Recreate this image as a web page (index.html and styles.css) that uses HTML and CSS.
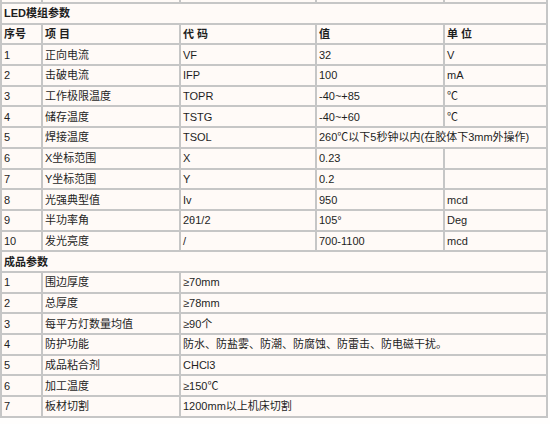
FILE: index.html
```html
<!DOCTYPE html>
<html>
<head>
<meta charset="utf-8">
<link rel="stylesheet" href="styles.css">
</head>
<body>
<table class="spec">
<colgroup>
<col class="c-no"><col class="c-item"><col class="c-code"><col class="c-val"><col class="c-unit">
</colgroup>
<tr class="stub"><td></td><td></td><td></td><td></td><td></td></tr>
<tr><td colspan="5" class="title">LED模组参数</td></tr>
<tr class="head"><td>序号</td><td>项 目</td><td>代 码</td><td>值</td><td>单 位</td></tr>
<tr><td>1</td><td>正向电流</td><td>VF</td><td>32</td><td>V</td></tr>
<tr><td>2</td><td>击破电流</td><td>IFP</td><td>100</td><td>mA</td></tr>
<tr><td>3</td><td>工作极限温度</td><td>TOPR</td><td>-40~+85</td><td>℃</td></tr>
<tr><td>4</td><td>储存温度</td><td>TSTG</td><td>-40~+60</td><td>℃</td></tr>
<tr><td>5</td><td>焊接温度</td><td>TSOL</td><td colspan="2">260℃以下5秒钟以内(在胶体下3mm外操作)</td></tr>
<tr><td>6</td><td>X坐标范围</td><td>X</td><td>0.23</td><td></td></tr>
<tr><td>7</td><td>Y坐标范围</td><td>Y</td><td>0.2</td><td></td></tr>
<tr><td>8</td><td>光强典型值</td><td>Iv</td><td>950</td><td>mcd</td></tr>
<tr><td>9</td><td>半功率角</td><td>2θ1/2</td><td>105°</td><td>Deg</td></tr>
<tr><td>10</td><td>发光亮度</td><td>/</td><td>700-1100</td><td>mcd</td></tr>
<tr><td colspan="5" class="title">成品参数</td></tr>
<tr><td>1</td><td>围边厚度</td><td colspan="3">≥70mm</td></tr>
<tr><td>2</td><td>总厚度</td><td colspan="3">≥78mm</td></tr>
<tr><td>3</td><td>每平方灯数量均值</td><td colspan="3">≥90个</td></tr>
<tr><td>4</td><td>防护功能</td><td colspan="3">防水、防盐雾、防潮、防腐蚀、防雷击、防电磁干扰。</td></tr>
<tr><td>5</td><td>成品粘合剂</td><td colspan="3">CHCl3</td></tr>
<tr><td>6</td><td>加工温度</td><td colspan="3">≥150℃</td></tr>
<tr><td>7</td><td>板材切割</td><td colspan="3">1200mm以上机床切割</td></tr>
</table>
</body>
</html>
```
FILE: styles.css
```css
html, body {
  margin: 0;
  padding: 0;
  background: #fffefd;
}
body {
  width: 550px;
  height: 424px;
  overflow: hidden;
  font-family: "Liberation Sans", "Noto Sans CJK SC", sans-serif;
  font-size: 11px;
  color: #1e1e1e;
}
.spec {
  border-collapse: collapse;
  table-layout: fixed;
  width: 546px;
  background: #fffaf7;
}
.c-no { width: 41px; }
.c-item { width: 138px; }
.c-code { width: 136px; }
.c-val { width: 128px; }
.c-unit { width: 103px; }
.spec td {
  border: 2px solid #c6c6c6;
  padding: 0 2px;
  height: 18.7px;
  line-height: 14px;
  white-space: nowrap;
  overflow: hidden;
  vertical-align: middle;
}
.spec tr.stub td {
  height: 2px;
  border-top: none;
  padding: 0;
}
.spec td.title,
.spec tr.head td {
  font-weight: bold;
}
```
